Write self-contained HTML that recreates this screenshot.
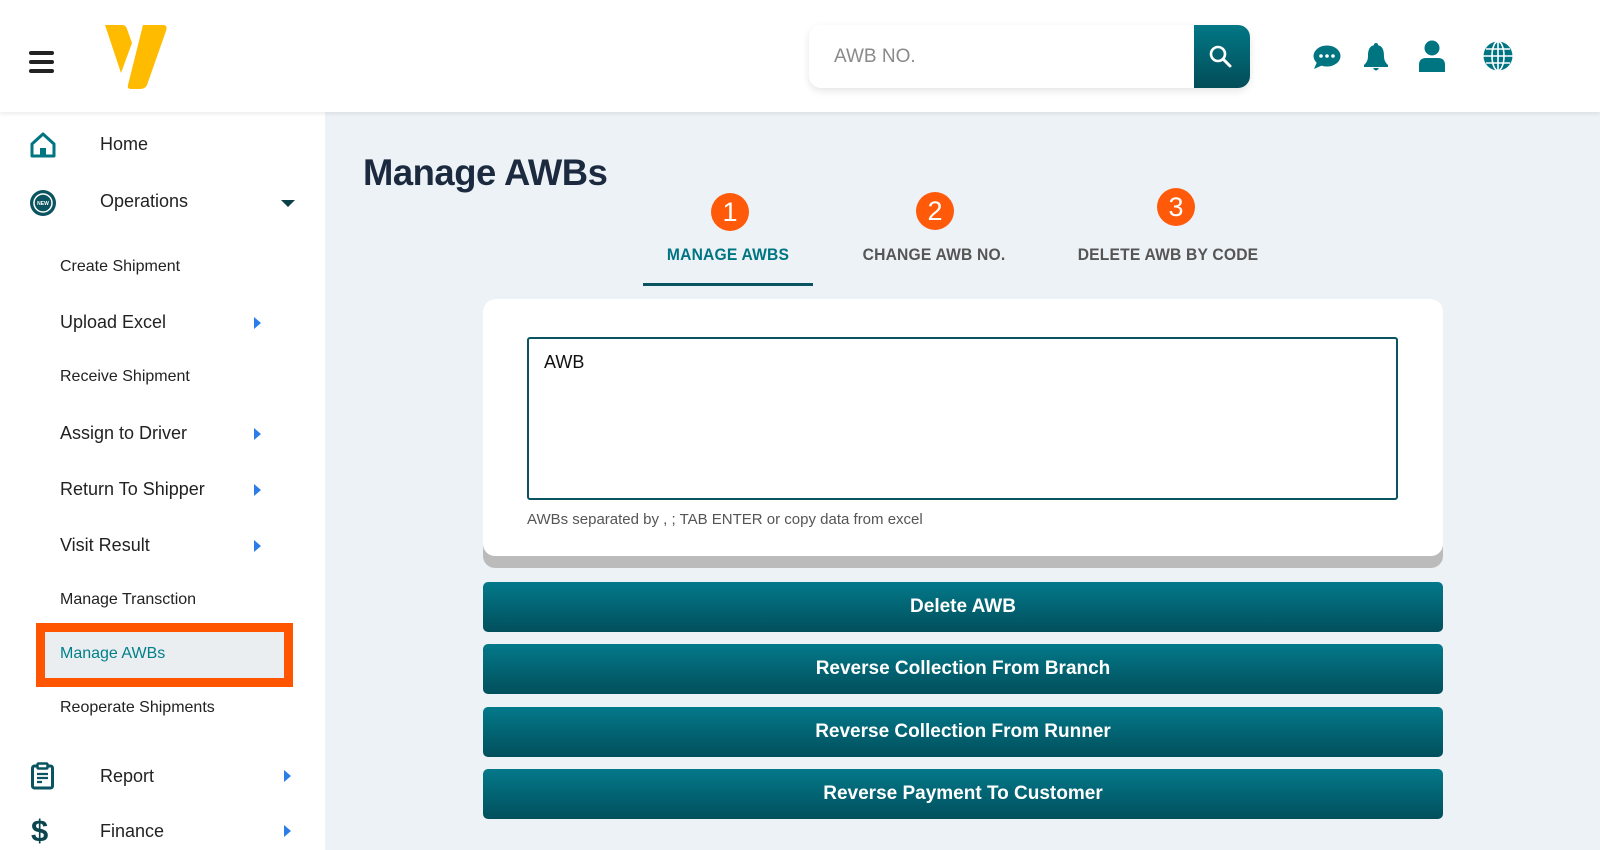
<!DOCTYPE html>
<html><head><meta charset="utf-8">
<style>
*{margin:0;padding:0;box-sizing:border-box}
html,body{width:1600px;height:850px;overflow:hidden}
body{font-family:"Liberation Sans",sans-serif;background:#edf2f6;position:relative;color:#222}
.abs{position:absolute}
#header{left:0;top:0;width:1600px;height:112px;background:#fff;box-shadow:0 2px 4px rgba(0,0,0,.08);z-index:2}
#side{left:0;top:112px;width:325px;height:738px;background:#fff}
.it{position:absolute;left:60px;font-size:16px;color:#222;line-height:20px}
.big{font-size:18px}
.tri{position:absolute;left:254px;width:0;height:0;border-top:6px solid transparent;border-bottom:6px solid transparent;border-left:7px solid #2b7de9}
.btn{position:absolute;left:483px;width:960px;height:50px;border-radius:5px;background:linear-gradient(#03798a,#024f5c);color:#fff;font-weight:bold;font-size:19px;text-align:center;line-height:50px}
.circ{position:absolute;width:38px;height:38px;border-radius:50%;background:#ff5a0a;color:#fff;font-size:27px;text-align:center;line-height:38px}
.tab{position:absolute;top:245px;font-size:17px;font-weight:bold;color:#555;transform:translateX(-50%);white-space:nowrap;letter-spacing:.2px}
</style></head><body>
<div id="header" class="abs">
  <div class="abs" style="left:29px;top:51px;width:25px;height:4px;background:#222;border-radius:2px"></div>
  <div class="abs" style="left:29px;top:60px;width:25px;height:4px;background:#222;border-radius:2px"></div>
  <div class="abs" style="left:29px;top:69px;width:25px;height:4px;background:#222;border-radius:2px"></div>
  <svg class="abs" style="left:102px;top:23px" width="66" height="68" viewBox="0 0 66 68">
    <path d="M3 2 H20 Q24 2 25 6 L30 20 L19 50 Z" fill="#ffbb00"/>
    <path d="M41 2 H61 Q66 2 64 8 L45 62 Q43 66 38 66 H29 Q25 66 26 62 Z" fill="#ffbb00"/>
  </svg>
  <div class="abs" style="left:809px;top:25px;width:441px;height:63px;background:#fff;border-radius:12px;box-shadow:0 3px 8px rgba(0,0,0,.1)"></div>
  <div class="abs" style="left:834px;top:46px;font-size:19px;color:#8a8a8a">AWB NO.</div>
  <div class="abs" style="left:1194px;top:25px;width:56px;height:63px;border-radius:0 12px 12px 0;background:linear-gradient(#027785,#024d58)"></div>
  <svg class="abs" style="left:1208px;top:44px" width="26" height="26" viewBox="0 0 26 26"><circle cx="10" cy="10" r="7" fill="none" stroke="#fff" stroke-width="2.6"/><path d="M15 15 L22 22" stroke="#fff" stroke-width="3" stroke-linecap="round"/></svg>
  <svg class="abs" style="left:1312px;top:44px" width="30" height="26" viewBox="0 0 30 26"><ellipse cx="15" cy="12" rx="13.5" ry="10.5" fill="#007582"/><path d="M5 18 L2 25 L11 21 Z" fill="#007582"/><circle cx="9" cy="12" r="1.8" fill="#fff"/><circle cx="15" cy="12" r="1.8" fill="#fff"/><circle cx="21" cy="12" r="1.8" fill="#fff"/></svg>
  <svg class="abs" style="left:1363px;top:42px" width="26" height="30" viewBox="0 0 26 30"><circle cx="13" cy="3" r="2" fill="#007582"/><path d="M13 3 C6 3 5 9 5 14 C5 19 3 21 1 23 V25 H25 V23 C23 21 21 19 21 14 C21 9 20 3 13 3Z" fill="#007582"/><path d="M10 26 Q13 31 16 26Z" fill="#007582"/></svg>
  <svg class="abs" style="left:1418px;top:40px" width="28" height="32" viewBox="0 0 28 32"><circle cx="14" cy="8" r="7.5" fill="#007582"/><path d="M1 32 V25 Q1 18 8 18 H20 Q27 18 27 25 V32Z" fill="#007582"/></svg>
  <svg class="abs" style="left:1483px;top:41px" width="30" height="30" viewBox="0 0 30 30"><circle cx="15" cy="15" r="14.5" fill="#007582"/><g stroke="#fff" stroke-width="1.6" fill="none"><ellipse cx="15" cy="15" rx="6" ry="14.5"/><path d="M15 0.5 V29.5 M0.5 15 H29.5 M3 8 H27 M3 22 H27"/></g></svg>
</div>

<div id="side" class="abs"></div>
<svg class="abs" style="left:29px;top:132px" width="28" height="26" viewBox="0 0 28 26"><path d="M3 12 L14 2 L25 12 V24 H3 Z" fill="none" stroke="#007582" stroke-width="3" stroke-linejoin="round"/><rect x="11" y="16" width="6" height="8" fill="#007582"/></svg>
<div class="abs big" style="left:100px;top:134px;font-size:18px">Home</div>
<svg class="abs" style="left:29px;top:189px" width="28" height="28" viewBox="0 0 28 28"><circle cx="14" cy="14" r="13" fill="#0a5360"/><circle cx="14" cy="14" r="9" fill="#0a5360" stroke="#fff" stroke-width="1.5"/><text x="14" y="16" font-size="5" fill="#fff" text-anchor="middle" font-family="Liberation Sans" font-weight="bold">NEW</text></svg>
<div class="abs" style="left:100px;top:191px;font-size:18px">Operations</div>
<div class="abs" style="left:281px;top:200px;width:0;height:0;border-left:7px solid transparent;border-right:7px solid transparent;border-top:7px solid #0a3f48"></div>

<div class="it" style="top:257px">Create Shipment</div>
<div class="it big" style="top:312px">Upload Excel</div><div class="tri" style="top:317px"></div>
<div class="it" style="top:367px">Receive Shipment</div>
<div class="it big" style="top:423px">Assign to Driver</div><div class="tri" style="top:428px"></div>
<div class="it big" style="top:479px">Return To Shipper</div><div class="tri" style="top:484px"></div>
<div class="it big" style="top:535px">Visit Result</div><div class="tri" style="top:540px"></div>
<div class="it" style="top:590px">Manage Transction</div>
<div class="abs" style="left:36px;top:623px;width:257px;height:64px;border:9px solid #ff5500;background:#ebeef0"></div>
<div class="it" style="top:644px;color:#00808a">Manage AWBs</div>
<div class="it" style="top:698px">Reoperate Shipments</div>

<svg class="abs" style="left:30px;top:762px" width="26" height="28" viewBox="0 0 26 28"><rect x="2.5" y="4" width="20" height="22" rx="2" fill="none" stroke="#0a5360" stroke-width="3"/><rect x="7.5" y="1.5" width="10" height="5" rx="1" fill="#fff" stroke="#0a5360" stroke-width="2.5"/><path d="M7 12 H18 M7 16 H18 M7 20 H12" stroke="#0a5360" stroke-width="2.2"/></svg>
<div class="abs" style="left:100px;top:766px;font-size:18px">Report</div>
<div class="tri" style="left:284px;top:770px"></div>
<div class="abs" style="left:31px;top:816px;font-size:31px;font-weight:bold;color:#0a4550;line-height:30px">$</div>
<div class="abs" style="left:100px;top:821px;font-size:18px">Finance</div>
<div class="tri" style="left:284px;top:825px"></div>

<div class="abs" style="left:363px;top:152px;font-size:37px;font-weight:bold;color:#1c2a40;letter-spacing:-.5px;transform:scaleX(.985);transform-origin:left">Manage AWBs</div>

<div class="circ" style="left:711px;top:193px">1</div>
<div class="circ" style="left:916px;top:192px">2</div>
<div class="circ" style="left:1157px;top:188px">3</div>
<div class="tab" style="left:728px;color:#007582;transform:translateX(-50%) scaleX(.92)">MANAGE AWBS</div>
<div class="tab" style="left:934px;transform:translateX(-50%) scaleX(.92)">CHANGE AWB NO.</div>
<div class="tab" style="left:1168px;transform:translateX(-50%) scaleX(.92)">DELETE AWB BY CODE</div>
<div class="abs" style="left:643px;top:283px;width:170px;height:3px;background:#0a5360"></div>

<div class="abs" style="left:483px;top:299px;width:960px;height:269px;border-radius:12px;background:#bbb"></div>
<div class="abs" style="left:483px;top:299px;width:960px;height:257px;border-radius:12px;background:#fff"></div>
<div class="abs" style="left:527px;top:337px;width:871px;height:163px;border:2px solid #0a5360;border-radius:3px;background:#fff"></div>
<div class="abs" style="left:544px;top:352px;font-size:18px;color:#111">AWB</div>
<div class="abs" style="left:527px;top:511px;font-size:15px;color:#555">AWBs separated by , ; TAB ENTER or copy data from excel</div>

<div class="btn" style="top:582px">Delete AWB</div>
<div class="btn" style="top:644px">Reverse Collection From Branch</div>
<div class="btn" style="top:707px">Reverse Collection From Runner</div>
<div class="btn" style="top:769px">Reverse Payment To Customer</div>
</body></html>
